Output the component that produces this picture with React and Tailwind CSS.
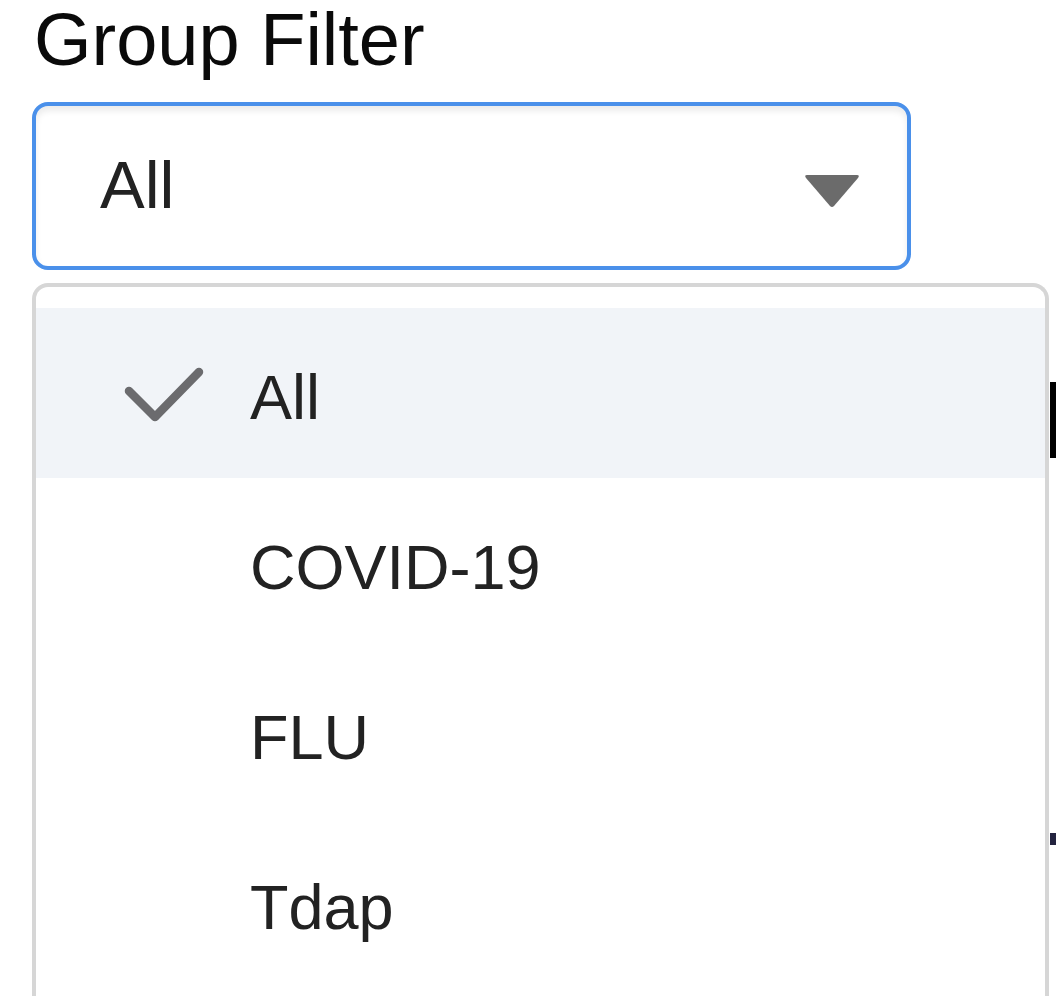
import React from "react";

const items = ["All", "COVID-19", "FLU", "Tdap"];

export default function App() {
  return (
    <div
      className="relative h-[996px] w-[1056px] overflow-hidden bg-white pl-[32px]"
      style={{ fontFamily: '"Liberation Sans", Arial, sans-serif' }}
    >
      <div className="absolute right-0 top-[382px] h-[76px] w-[6px] bg-black" />
      <div className="absolute right-0 top-[833px] h-[12px] w-[6px] bg-[#23233f]" />

      <div className="pl-[2px] text-[74px] leading-[80px] text-[#0a0a0a]">Group Filter</div>

      <div className="mt-[22px] flex h-[168px] w-[879px] items-center justify-between rounded-[16px] border-[4px] border-[#4a90ea] pl-[64px] pr-[47px] shadow-[inset_0_5px_6px_rgba(0,0,0,0.08)]">
        <span className="pb-[4px] text-[67px] leading-[67px] text-[#222222]">All</span>
        <svg width="56" height="36" viewBox="0 0 56 36" className="mt-[10px]">
          <path d="M3 2 L53 2 Q56 2 54 5 L30 33 Q28 35 26 33 L2 5 Q0 2 3 2 Z" fill="#6b6b6b" />
        </svg>
      </div>

      <div className="relative z-10 mt-[13px] w-[1017px] rounded-t-[16px] border-x-[4px] border-t-[4px] border-[#d6d6d6] bg-white pt-[21px] pb-[40px]">
        {items.map((it, i) => (
          <div
            key={it}
            className={`flex h-[170px] items-center ${i === 0 ? "bg-[#f1f4f8]" : ""}`}
          >
            <div className="flex w-[214px] items-center pl-[85px]">
              {i === 0 && (
                <svg width="90" height="62" viewBox="0 0 90 62" className="mb-[2px]">
                  <path
                    d="M8 30 L34 56 L78 11"
                    fill="none"
                    stroke="#6b6b6e"
                    strokeWidth="8.5"
                    strokeLinecap="round"
                    strokeLinejoin="round"
                  />
                </svg>
              )}
            </div>
            <span className="pt-[8px] text-[63px] leading-[63px] text-[#222222]">{it}</span>
          </div>
        ))}
      </div>
    </div>
  );
}
